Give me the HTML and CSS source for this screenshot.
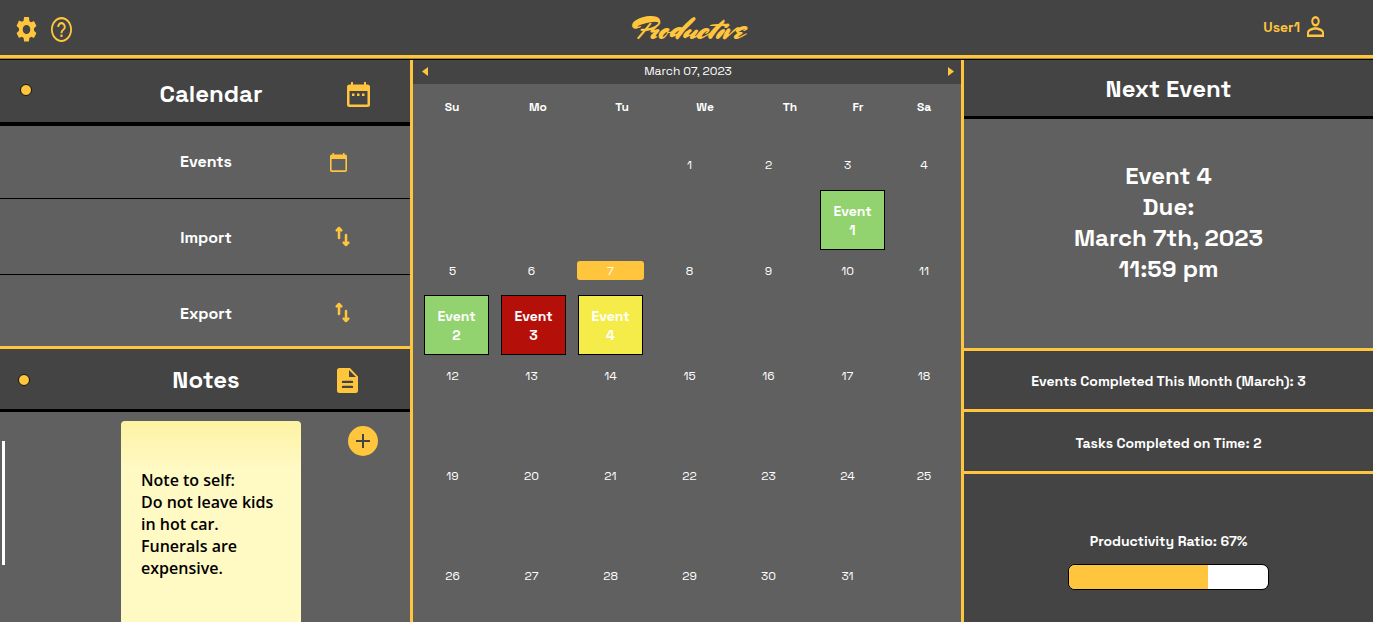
FILE: index.html
```html
<!DOCTYPE html>
<html lang="en">
<head>
<meta charset="utf-8">
<meta name="viewport" content="width=device-width, initial-scale=1">
<title>Productive</title>
<link rel="stylesheet" href="styles.css">
</head>
<body>
<header class="topbar">
  <div class="tools">
    <button class="icon-button" aria-label="Settings">
      <svg width="21" height="25" viewBox="2 2 20 20" preserveAspectRatio="none"><path d="M19.14 12.94c.04-.3.06-.61.06-.94 0-.32-.02-.64-.07-.94l2.03-1.58a.49.49 0 0 0 .12-.61l-1.92-3.32a.49.49 0 0 0-.59-.22l-2.39.96c-.5-.38-1.03-.7-1.62-.94L14.4 2.4A.48.48 0 0 0 13.92 2h-3.84c-.24 0-.43.17-.47.41l-.36 2.54c-.59.24-1.13.57-1.62.94l-2.39-.96a.48.48 0 0 0-.59.22L2.74 8.87a.48.48 0 0 0 .12.61l2.03 1.58c-.05.3-.09.63-.09.94s.02.64.07.94l-2.03 1.58a.49.49 0 0 0-.12.61l1.92 3.32c.12.22.37.29.59.22l2.39-.96c.5.38 1.03.7 1.62.94l.36 2.54c.05.24.24.41.48.41h3.84c.24 0 .44-.17.47-.41l.36-2.54c.59-.24 1.13-.56 1.62-.94l2.39.96c.22.08.47 0 .59-.22l1.92-3.32a.48.48 0 0 0-.12-.61zM12 15.6a3.6 3.6 0 1 1 0-7.2 3.6 3.6 0 0 1 0 7.2z"/></svg>
    </button>
    <button class="icon-button" aria-label="Help">
      <svg width="21" height="25" viewBox="2 2 20 20" preserveAspectRatio="none"><path d="M11 18h2v-2h-2v2zm1-16C6.480 2 2 6.480 2 12s4.480 10 10 10 10-4.480 10-10S17.520 2 12 2zm0 18.300c-4.600 0-8.300-3.700-8.300-8.300S7.400 3.700 12 3.700s8.300 3.700 8.300 8.300-3.700 8.300-8.300 8.300zM12 6c-2.210 0-4 1.790-4 4h1.800c0-1.300 1-2.300 2.200-2.300s2.200 1 2.200 2.300c0 2-3.100 1.750-3.100 5h1.800c0-2.250 3.100-2.500 3.100-5 0-2.210-1.790-4-4-4z"/></svg>
    </button>
  </div>
  <h1 class="logo">Productive</h1>
  <a class="user" href="#">
    <span>User1</span>
    <svg width="17" height="21" viewBox="4 4 16 16" preserveAspectRatio="none"><path d="M12 5.900a2.100 2.100 0 1 1 0 4.200 2.100 2.100 0 0 1 0-4.200m0 8.500c2.970 0 6.100 1.460 6.100 2.100v1.600H5.900v-1.600c0-.64 3.130-2.100 6.100-2.100M12 4a4 4 0 1 0 0 8 4 4 0 0 0 0-8zm0 8.500c-2.670 0-8 1.340-8 4V20h16v-3.500c0-2.660-5.330-4-8-4z"/></svg>
  </a>
</header>

<main class="columns">
  <nav class="sidebar">
    <div class="row row-title">
      <button class="dot" aria-label="Toggle calendar"></button>
      <h2>Calendar</h2>
      <svg class="row-icon" width="23" height="25" viewBox="0 0 23 25"><path fill-rule="evenodd" d="M4 0h2v2.500h11V0h2v2.500h1.500A2.500 2.500 0 0 1 23 5v17.500a2.500 2.500 0 0 1-2.500 2.500h-18A2.500 2.500 0 0 1 0 22.500V5a2.500 2.500 0 0 1 2.500-2.500H4zM2.500 9v13.500h18V9zM5 11.500h2.500V14H5zm5 0h2.500V14H10zm5 0h2.500V14H15z"/></svg>
    </div>
    <a class="row row-link" href="#">
      <span class="row-label">Events</span>
      <svg class="row-icon icon-events" width="17" height="19" viewBox="0 0 17 19"><path fill-rule="evenodd" d="M2.500 0H4v1.500h9V0h1.500v1.500h.8A1.700 1.700 0 0 1 17 3.200v14.100a1.700 1.700 0 0 1-1.700 1.700H1.700A1.700 1.700 0 0 1 0 17.300V3.200A1.700 1.700 0 0 1 1.700 1.500h.8zM1.600 6v11.300h13.800V6z"/></svg>
    </a>
    <a class="row row-link" href="#">
      <span class="row-label">Import</span>
      <svg class="row-icon icon-transfer" width="15" height="21" viewBox="0 0 15 21"><path class="arrows" d="M4 12V2M1.700 4.300 4 2l2.300 2.300M11 9v10M8.700 16.700l2.300 2.300 2.300-2.300"/></svg>
    </a>
    <a class="row row-link" href="#">
      <span class="row-label">Export</span>
      <svg class="row-icon icon-transfer" width="15" height="21" viewBox="0 0 15 21"><path class="arrows" d="M4 12V2M1.700 4.300 4 2l2.300 2.300M11 9v10M8.700 16.700l2.300 2.300 2.300-2.300"/></svg>
    </a>
    <div class="row row-notes">
      <button class="dot" aria-label="Toggle notes"></button>
      <h2>Notes</h2>
      <svg class="row-icon icon-notes" width="21" height="25" viewBox="0 0 21 25"><path fill-rule="evenodd" d="M2.500 0H13l8 8.500v14a2.500 2.500 0 0 1-2.500 2.500h-16A2.500 2.500 0 0 1 0 22.500v-20A2.500 2.500 0 0 1 2.500 0zM12 2v7h7zM6 12.700a1.200 1.200 0 0 0 0 2.400h9a1.200 1.200 0 0 0 0-2.400zm0 5a1.200 1.200 0 0 0 0 2.400h9a1.200 1.200 0 0 0 0-2.400z"/></svg>
    </div>
    <section class="notes" aria-label="Notes">
      <div class="scroll-thumb"></div>
      <article class="note">
        <p>Note to self:<br>Do not leave kids in hot car. Funerals are expensive.</p>
      </article>
      <button class="add" aria-label="Add note">
        <svg width="14" height="14" viewBox="0 0 14 14"><path d="M7 0v14M0 7h14"/></svg>
      </button>
    </section>
  </nav>

  <section class="calendar">
    <div class="datebar">
      <button class="arrow" aria-label="Previous"><svg width="6" height="9" viewBox="0 0 6 9"><path d="M6 0v9L0 4.500z"/></svg></button>
      <span>March 07, 2023</span>
      <button class="arrow" aria-label="Next"><svg width="6" height="9" viewBox="0 0 6 9"><path d="M0 0v9l6-4.500z"/></svg></button>
    </div>
    <table class="month">
      <thead>
        <tr class="weekdays"><th>Su</th><th>Mo</th><th>Tu</th><th>We</th><th>Th</th><th>Fr</th><th>Sa</th></tr>
      </thead>
      <tbody>
        <tr class="dates"><td></td><td></td><td></td><td>1</td><td>2</td><td>3</td><td>4</td></tr>
        <tr class="events events-end"><td class="event green">Event 1</td></tr>
        <tr class="dates"><td>5</td><td>6</td><td><span class="today">7</span></td><td>8</td><td>9</td><td>10</td><td>11</td></tr>
        <tr class="events"><td class="event green">Event 2</td><td class="event red">Event 3</td><td class="event yellow">Event 4</td></tr>
        <tr class="dates free"><td>12</td><td>13</td><td>14</td><td>15</td><td>16</td><td>17</td><td>18</td></tr>
        <tr class="dates free"><td>19</td><td>20</td><td>21</td><td>22</td><td>23</td><td>24</td><td>25</td></tr>
        <tr class="dates"><td>26</td><td>27</td><td>28</td><td>29</td><td>30</td><td>31</td><td></td></tr>
      </tbody>
    </table>
  </section>

  <aside class="summary">
    <h2 class="summary-title">Next Event</h2>
    <p class="next">Event 4<br>Due:<br>March 7th, 2023<br>11:59 pm</p>
    <p class="stat">Events Completed This Month (March): 3</p>
    <p class="stat">Tasks Completed on Time: 2</p>
    <div class="ratio">
      <label for="ratio">Productivity Ratio: 67%</label>
      <progress id="ratio" max="100" value="70"></progress>
    </div>
  </aside>
</main>
</body>
</html>
```
FILE: styles.css
```css
:root {
  --dark: #444;
  --mid: #606060;
  --gold: #ffc53d;
}

* { box-sizing: border-box; }

body {
  margin: 0;
  height: 100vh;
  display: flex;
  flex-direction: column;
  overflow: hidden;
  background: var(--mid);
  color: #fff;
  font: 700 14px/20px "Space Grotesk", Inter, sans-serif;
}

h1, h2, p { margin: 0; }
h2 { font-size: 24px; line-height: 32px; font-weight: 700; }
a { color: inherit; text-decoration: none; }
svg { display: block; fill: var(--gold); }
button { border: 0; padding: 0; background: none; cursor: pointer; }

.topbar {
  display: grid;
  grid-template-columns: 1fr auto 1fr;
  align-items: center;
  padding: 0 49px 0 16px;
  height: 60px;
  background: var(--dark);
  border-bottom: 1px solid #000;
  box-shadow: inset 0 -1px #a58239, inset 0 -4px var(--gold);
  flex: none;
}
.tools { display: flex; gap: 14px; }
.logo {
  padding: 0 0 2px 36px;
  color: var(--gold);
  font: 400 32px/32px "Mrs Sheppards", "Mr Dafoe", "Brush Script MT", cursive;
}
.user {
  display: flex;
  justify-content: flex-end;
  align-items: center;
  gap: 7px;
  padding-bottom: 6px;
  color: var(--gold);
}

.columns {
  flex: 1;
  min-height: 0;
  display: grid;
  grid-template-columns: 413fr 551fr 409fr;
  grid-template-rows: minmax(0, 1fr);
}

.sidebar {
  display: flex;
  flex-direction: column;
  min-width: 0;
  border-right: 3px solid var(--gold);
}
.row {
  display: grid;
  grid-template-columns: 1fr 2fr 1fr;
  align-items: center;
  flex: none;
  text-align: center;
}
.row-title {
  height: 66px;
  padding-top: 6px;
  background: var(--dark);
  border-bottom: 4px solid #000;
}
.row-title h2 { padding-left: 12px; }
.row-title .dot { margin-bottom: 8px; }
.row-link { height: 76px; padding-top: 2px; border-bottom: 1px solid #000; font-size: 16px; }
.row-link:first-of-type { height: 73px; padding-top: 0; }
.row-link:last-of-type { height: 74px; padding-top: 6px; border-bottom: 3px solid var(--gold); }
.row-label { grid-column: 2; padding-left: 2px; }
.row-icon { justify-self: center; }
.icon-events { margin-right: 40px; }
.icon-transfer { margin: 0 32px 2px 0; }
.icon-notes { margin-right: 22px; }
.arrows {
  fill: none;
  stroke: var(--gold);
  stroke-width: 2.5;
  stroke-linecap: round;
  stroke-linejoin: round;
}
.row-notes { height: 63px; padding-top: 2px; background: var(--dark); border-bottom: 3px solid #000; }
.row-notes h2 { padding-left: 2px; }
.dot {
  width: 12px;
  height: 12px;
  margin-left: 20px;
  border: 1px solid #111;
  border-radius: 50%;
  background: var(--gold);
}
.row-notes .dot { margin-left: 18px; }

.notes {
  flex: 1;
  min-height: 0;
  display: grid;
  grid-template-columns: 1fr 180px 1fr;
  padding-left: 2px;
  overflow: hidden;
}
.scroll-thumb { width: 3px; height: 124px; margin-top: 29px; background: #fff; }
.note {
  margin: 9px -5px 0 5px;
  padding: 48px 20px;
  min-height: 240px;
  border-radius: 4px;
  background: linear-gradient(#fdf3a3, #fff9c4 48px);
  color: #000;
  font: 600 16px/22px "Open Sans", "Noto Sans", sans-serif;
}
.add {
  width: 30px;
  height: 30px;
  margin: 14px 0 0 52px;
  display: grid;
  place-items: center;
  border-radius: 50%;
  background: var(--gold);
}
.add path { stroke: var(--dark); stroke-width: 2; }

.calendar { min-width: 0; border-right: 3px solid var(--gold); }
.datebar {
  display: flex;
  justify-content: space-between;
  align-items: center;
  height: 24px;
  padding: 0 7px 2px 9px;
  background: var(--dark);
  font-size: 12px;
  font-weight: 400;
}
.month, .month thead, .month tbody { display: block; }
.month { font-size: 12px; text-align: center; }
.month th, .month td { padding: 0; }
.weekdays { display: grid; grid-template-columns: 78fr 94fr 74fr 92fr 78fr 58fr 74fr; height: 71px; padding-top: 13px; }
.dates {
  display: grid;
  grid-template-columns: repeat(6, 79fr) 74fr;
  height: 19px;
  line-height: 20px;
  font-weight: 400;
}
.free { margin-bottom: 81px; }
.today { display: block; height: 19px; margin: 0 6px; border-radius: 3px; background: var(--gold); }
.events { display: flex; gap: 12px; height: 86px; padding: 15px 11px 11px; }
.events-end { justify-content: flex-end; height: 87px; padding-top: 16px; padding-right: 76px; }
.month .event {
  width: 65px;
  height: 60px;
  padding: 11px 10px;
  border: 1px solid #000;
  font-size: 14px;
  line-height: 19px;
}
.green { background: #93d36f; }
.red { background: #b50f0a; }
.yellow { background: #f5eb49; }

.summary { display: flex; flex-direction: column; min-width: 0; text-align: center; }
.summary-title { height: 59px; padding: 13px 0; background: var(--dark); border-bottom: 3px solid #000; }
.next {
  height: 232px;
  padding-top: 41px;
  border-bottom: 3px solid var(--gold);
  font-size: 24px;
  line-height: 31px;
}
.stat { height: 61px; padding: 20px 0; background: var(--dark); border-bottom: 3px solid var(--gold); }
.stat + .stat { height: 62px; padding-top: 21px; }
.ratio {
  flex: 1;
  display: flex;
  flex-direction: column;
  align-items: center;
  gap: 13px;
  padding-top: 57px;
  background: var(--dark);
}
.ratio progress {
  appearance: none;
  width: 201px;
  height: 26px;
  border: 1px solid #000;
  border-radius: 7px;
  overflow: hidden;
}
.ratio progress::-webkit-progress-bar { background: #fff; }
.ratio progress::-webkit-progress-value { background: var(--gold); }
```
